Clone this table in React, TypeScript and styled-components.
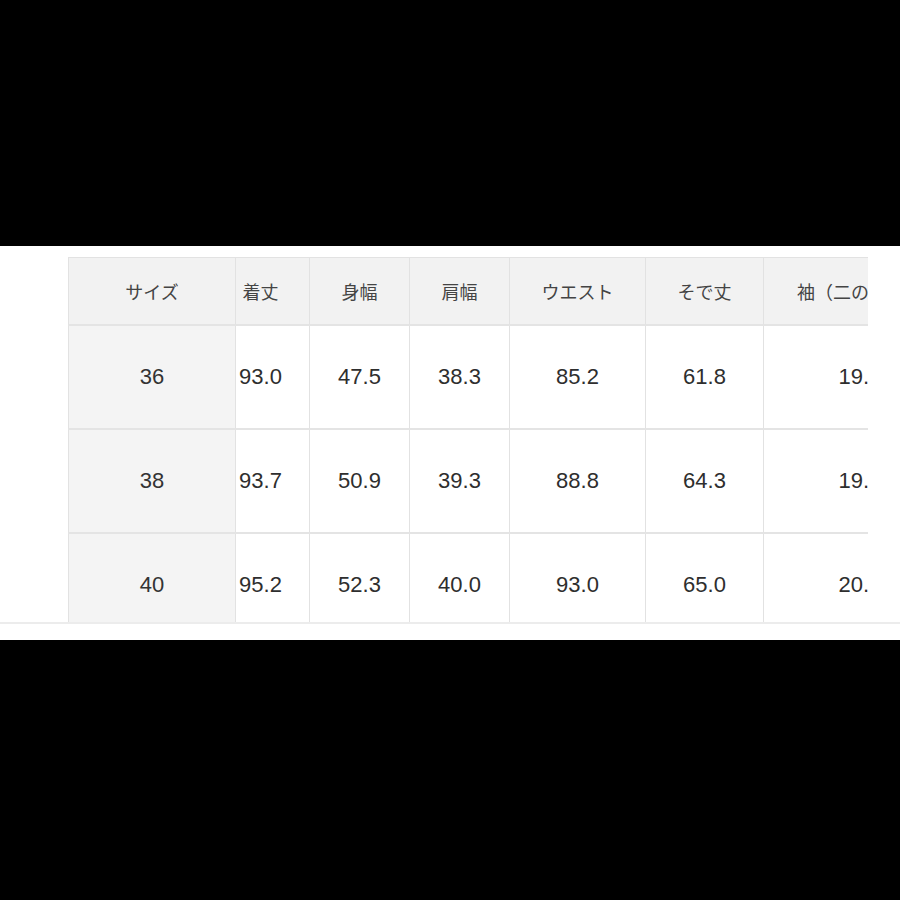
import React, { useLayoutEffect, useRef } from 'react'
import styled, { createGlobalStyle } from 'styled-components'

type Row = { size: string; values: string[] }

const headers = ['着丈', '身幅', '肩幅', 'ウエスト', 'そで丈', '袖（二の腕）幅']
const widths = [168, 98, 100, 100, 136, 118, 193]

const rows: Row[] = [
  { size: '36', values: ['93.0', '47.5', '38.3', '85.2', '61.8', '19.5'] },
  { size: '38', values: ['93.7', '50.9', '39.3', '88.8', '64.3', '19.5'] },
  { size: '40', values: ['95.2', '52.3', '40.0', '93.0', '65.0', '20.0'] },
]

const App: React.FC = () => {
  const viewportRef = useRef<HTMLDivElement>(null)

  // the table is shown scrolled a little to the right
  useLayoutEffect(() => {
    if (viewportRef.current) viewportRef.current.scrollLeft = 24
  }, [])

  return (
    <>
      <GlobalStyle />
      <Band>
        <TableSection>
          <Viewport ref={viewportRef}>
            <SizeTable>
              <colgroup>
                {widths.map((w, i) => (
                  <Col key={i} $w={w} />
                ))}
              </colgroup>
              <thead>
                <tr>
                  <HeadCell $sticky>サイズ</HeadCell>
                  {headers.map((h) => (
                    <HeadCell key={h}>{h}</HeadCell>
                  ))}
                </tr>
              </thead>
              <tbody>
                {rows.map((row) => (
                  <tr key={row.size}>
                    <SizeCell>{row.size}</SizeCell>
                    {row.values.map((v, i) => (
                      <ValueCell key={i}>{v}</ValueCell>
                    ))}
                  </tr>
                ))}
              </tbody>
            </SizeTable>
          </Viewport>
        </TableSection>
        <BandFoot />
      </Band>
    </>
  )
}

export default App

const GlobalStyle = createGlobalStyle`
  *, *::before, *::after {
    box-sizing: border-box;
  }
  html, body {
    margin: 0;
    padding: 0;
    background: #000;
  }
  body {
    width: 900px;
    height: 900px;
    overflow: hidden;
    font-family: "Liberation Sans", "Noto Sans CJK JP", sans-serif;
  }
`

const Band = styled.div`
  margin-top: 246px;
  width: 900px;
  background: #fff;
  display: flex;
  flex-direction: column;
`

const TableSection = styled.div`
  padding: 11px 0 0 68px;
  border-bottom: 2px solid #ececec;
`

const BandFoot = styled.div`
  height: 16px;
  background: #fff;
`

const Viewport = styled.div`
  width: 800px;
  height: 365px;
  overflow-x: auto;
  overflow-y: hidden;
  scrollbar-width: none;
  &::-webkit-scrollbar {
    display: none;
  }
`

const SizeTable = styled.table`
  border-collapse: separate;
  border-spacing: 0;
  table-layout: fixed;
  width: 913px;
  border-top: 1px solid #e2e2e2;
`

const Col = styled.col<{ $w: number }>`
  width: ${(p) => p.$w}px;
`

const HeadCell = styled.th<{ $sticky?: boolean }>`
  height: 68px;
  padding: 0;
  background: #f2f2f2;
  color: #444;
  font-family: "Noto Sans CJK JP", sans-serif;
  font-size: 18px;
  font-weight: 400;
  text-align: center;
  white-space: nowrap;
  overflow: hidden;
  border-right: 1px solid #e2e2e2;
  border-bottom: 2px solid #e4e4e4;
  ${(p) =>
    p.$sticky &&
    `
    position: sticky;
    left: 0;
    z-index: 2;
    border-left: 1px solid #e2e2e2;
  `}
`

const SizeCell = styled.td`
  position: sticky;
  left: 0;
  z-index: 1;
  height: 104px;
  padding: 0;
  background: #f4f4f4;
  color: #333;
  font-size: 22px;
  text-align: center;
  border-left: 1px solid #e2e2e2;
  border-right: 1px solid #e2e2e2;
  border-bottom: 2px solid #e4e4e4;
`

const ValueCell = styled.td`
  height: 104px;
  padding: 0;
  background: #fff;
  color: #2e2e2e;
  font-size: 22px;
  text-align: center;
  white-space: nowrap;
  border-right: 1px solid #e2e2e2;
  border-bottom: 2px solid #e4e4e4;
`
